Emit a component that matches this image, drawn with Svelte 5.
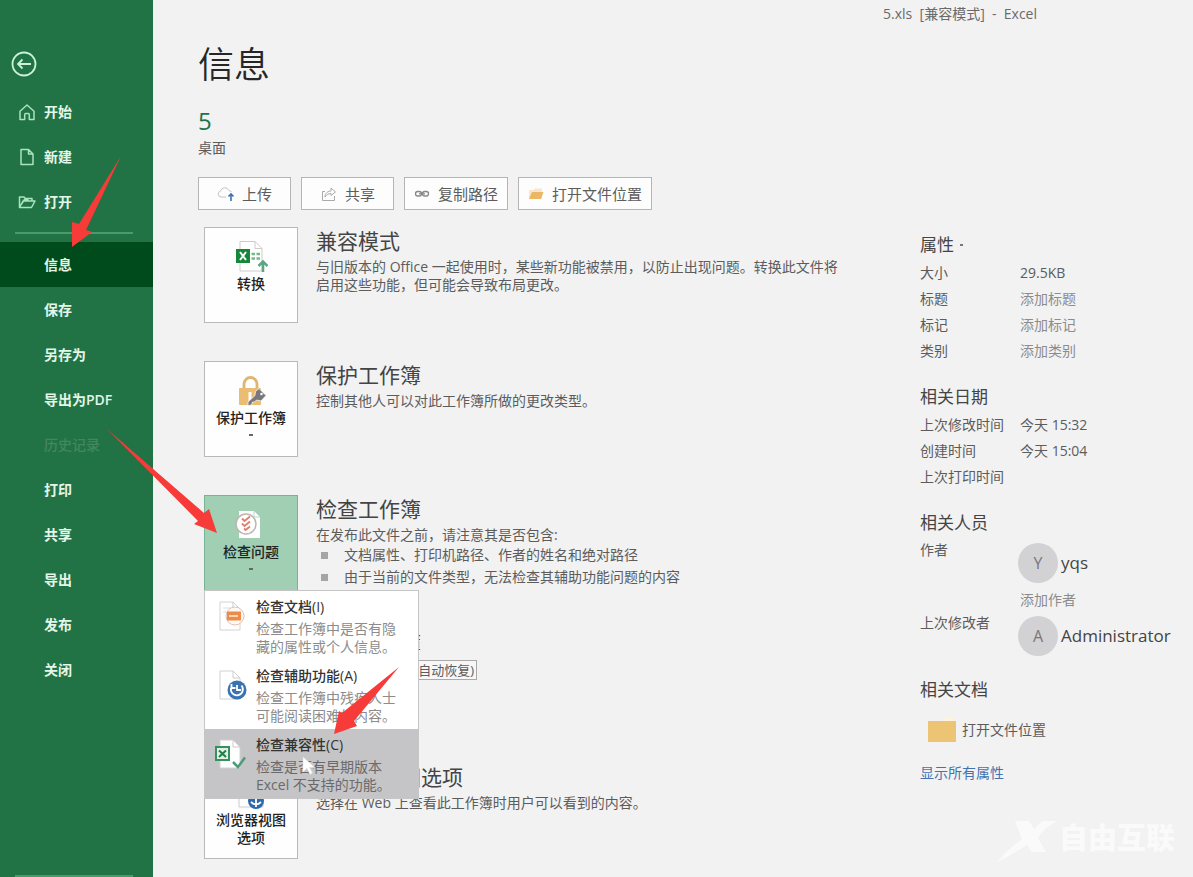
<script>
  const topNav = [
    { label: '开始', icon: 'home' },
    { label: '新建', icon: 'page' },
    { label: '打开', icon: 'open' }
  ];
  const nav = ['信息', '保存', '另存为', '导出为PDF', '历史记录', '打印', '共享', '导出', '发布', '关闭'];
  const props = [
    ['标题', '添加标题'],
    ['标记', '添加标记'],
    ['类别', '添加类别']
  ];
  const menu = [
    { id: 'doc', title: '检查文档(I)', lines: ['检查工作簿中是否有隐', '藏的属性或个人信息。'] },
    { id: 'access', title: '检查辅助功能(A)', lines: ['检查工作簿中残疾人士', '可能阅读困难的内容。'] },
    { id: 'compat', title: '检查兼容性(C)', lines: ['检查是否有早期版本', 'Excel 不支持的功能。'] }
  ];
</script>

<div class="app" lang="zh-CN">
  <nav class="side">
    <button class="back" aria-label="返回">
      <svg width="26" height="26" viewBox="0 0 26 26" fill="none" stroke="#c9f2d8" stroke-width="1.8"><circle cx="13" cy="13" r="11.5" /><path d="M20 13H7M11.5 8.500L7 13l4.500 4.500" /></svg>
    </button>
    {#each topNav as n}
      <button class="item">
        <svg width="18" height="18" viewBox="0 0 18 18" fill="none" stroke="#a9e3bf" stroke-width="1.5" stroke-linejoin="round">
          {#if n.icon === 'home'}
            <path d="M2 8.300L9 2l7 6.300V16.500H11.300V11.500a1 1 0 0 0-1-1H7.700a1 1 0 0 0-1 1V16.500H2z" />
          {:else if n.icon === 'page'}
            <path d="M3 1.500h7.500L15 6v10.500H3zM10.500 1.500V6H15" />
          {:else}
            <path d="M1.500 14.500V4h4.500l1.500 1.500h6.500V8M1.500 14.500L5 8h12l-3.500 6.500zM3.500 11l3-4.500h4" />
          {/if}
        </svg>
        <span>{n.label}</span>
      </button>
    {/each}
    <hr />
    {#each nav as n, i}
      <button class="item" class:active={i === 0} disabled={i === 4}><span>{n}</span></button>
    {/each}
    <hr class="foot" />
  </nav>

  <main>
    <header>5.xls&nbsp; [兼容模式]&nbsp; -&nbsp; Excel</header>
    <h1>信息</h1>
    <p class="name">5</p>
    <p class="place">桌面</p>
    <div class="actions">
      <button>
        <svg width="18" height="16" viewBox="0 0 18 16" fill="none"><path d="M9 11H4a3 3 0 0 1-.5-5.900A4.500 4.500 0 0 1 12 4.500 3 3 0 0 1 14.500 6" stroke="#c4c4c4" /><path d="M14 15V8M11.500 10.500L14 8l2.500 2.500" stroke="#3f70b5" stroke-width="1.600" /></svg>
        上传
      </button>
      <button>
        <svg width="18" height="16" viewBox="0 0 18 16" fill="none" stroke="#aaa"><path d="M5 5.500H2.500v9h12V10M5 11c0-4 3-6 6-6V2L15.500 6 11 9.500V7.500C8 7.500 6.500 9 5 11z" /></svg>
        共享
      </button>
      <button class="tight">
        <svg width="16" height="16" viewBox="0 0 16 16" fill="none" stroke="#888" stroke-width="1.300"><rect x="1.500" y="5.500" width="6" height="4.500" rx="2.200" /><rect x="8.500" y="5.500" width="6" height="4.500" rx="2.200" /><path d="M5 7.800h6" /></svg>
        复制路径
      </button>
      <button class="tight">
        <svg width="16" height="16" viewBox="0 0 16 16"><path d="M1 4h5l1-1.500h7V12H1z" fill="#fae5cb" /><path d="M4 6h11.500l-2.500 7H1z" fill="#e9b765" /></svg>
        打开文件位置
      </button>
    </div>

    <div class="cols">
      <div class="sections">
        <section>
          <button class="tile">
            <svg width="34" height="34" viewBox="0 0 34 34" fill="none">
              <path d="M6 1.500h15l7 7V31H6z" fill="#fff" stroke="#ccc" /><path d="M21 1.500v7h7" stroke="#ccc" />
              <rect x="2" y="9" width="14" height="14" fill="#15873b" /><path d="M6 12l6 8M12 12l-6 8" stroke="#fff" stroke-width="2" />
              <path d="M17.500 14h3.500M22.500 14H26M17.500 18.500h3.500M22.500 18.500H26" stroke="#76b78c" stroke-width="2.500" />
              <path d="M29 32V22M24.500 26l4.500-4.500 4.500 4.500" stroke="#5aa583" stroke-width="2.500" />
            </svg>
            <span>转换</span>
          </button>
          <div>
            <h2>兼容模式</h2>
            <p>与旧版本的 Office 一起使用时，某些新功能被禁用，以防止出现问题。转换此文件将<br />启用这些功能，但可能会导致布局更改。</p>
          </div>
        </section>

        <section>
          <button class="tile">
            <svg width="34" height="34" viewBox="0 0 34 34" fill="none">
              <path d="M10 15V10a6.500 6.500 0 0 1 13 0v5" stroke="#dfb56f" stroke-width="2.800" />
              <rect x="5" y="14" width="22" height="17" rx="1" fill="#eabd73" /><path d="M14.500 18h3v9h-3z" fill="#fff" />
              <path d="M25 14.500l7 7-5 5.500-4.500-1-2 2h-2l-1 3-3.500.500v-3.500l7-6.500.500-4z" fill="#77777c" stroke="#f6f6f6" stroke-width=".8" /><circle cx="27.500" cy="20" r="1.300" fill="#fff" />
            </svg>
            <span>保护工作簿</span><i></i>
          </button>
          <div>
            <h2>保护工作簿</h2>
            <p>控制其他人可以对此工作簿所做的更改类型。</p>
          </div>
        </section>

        <section>
          <div class="holder">
            <button class="tile on" aria-expanded="true">
              <svg width="34" height="34" viewBox="0 0 34 34" fill="none">
                <path d="M5 3h15l6 6v21H5z" fill="#fff" /><path d="M20 3v6h6" stroke="#bcd5c5" />
                <circle cx="12" cy="16" r="10" fill="#fff" stroke="#bbb5b1" stroke-width="1.500" /><path d="M8 10.500l2.500 2.500L16 8.500M8 15.500l2.500 2.500L16 13.500M10 20.500l1.500 1.500L16 18.500" stroke="#dd7f6c" stroke-width="1.800" />
              </svg>
              <span>检查问题</span><i></i>
            </button>
            <div class="menu" role="menu">
              {#each menu as m}
                <button class="entry" class:hover={m.id === 'compat'} role="menuitem">
                  <svg width="40" height="36" viewBox="0 0 40 36" fill="none">
                    <path d="M10 5h13l7 7v21H10z" fill="#fff" stroke="#d2d2d2" /><path d="M23 5v7h7" stroke="#ccc" />
                    {#if m.id === 'doc'}
                      <path d="M13 11h8M13 15h3" stroke="#ddd" />
                      <circle cx="25" cy="19" r="9" fill="#fff8f3" stroke="#e3c0b3" /><rect x="17" y="14.500" width="14" height="9" fill="#ed8b48" /><path d="M19 19h9" stroke="#fff4df" stroke-width="1.500" />
                    {:else if m.id === 'access'}
                      <circle cx="27" cy="24" r="9.500" fill="#3a73b4" /><path d="M21 22a6 6 0 1 0 10.500-2.500M21.500 18v4h4M27 19v5h4" stroke="#fff" stroke-width="1.800" />
                    {:else}
                      <rect x="6" y="12" width="13" height="13" fill="#def2e5" stroke="#38905b" stroke-width="2" /><path d="M9 15.500l7 6.500M16 15.500L9 22" stroke="#227d48" stroke-width="2" />
                      <path d="M23 27l5 5L35 22.500" stroke="#4e9b75" stroke-width="2.500" />
                    {/if}
                  </svg>
                  <span class="txt"><b>{m.title}</b><small>{m.lines[0]}<br />{m.lines[1]}</small></span>
                </button>
              {/each}
            </div>
          </div>
          <div>
            <h2>检查工作簿</h2>
            <p>在发布此文件之前，请注意其是否包含:</p>
            <ul>
              <li>文档属性、打印机路径、作者的姓名和绝对路径</li>
              <li>由于当前的文件类型，无法检查其辅助功能问题的内容</li>
            </ul>
          </div>
        </section>

        <section>
          <div class="tile"></div>
          <div>
            <h2>管理工作簿</h2>
            <button class="recover">(自动恢复)</button>
          </div>
        </section>

        <section>
          <button class="tile">
            <svg width="34" height="34" viewBox="0 0 34 34" fill="none"><path d="M5 2h18l6 6v23H5z" stroke="#ccc" /><circle cx="22" cy="25" r="8" fill="#2d69ad" /><path d="M22 17v14M17 26c3 3 7 3 10 0" stroke="#fff" stroke-width="1.800" /></svg>
            <span>浏览器视图<br />选项</span>
          </button>
          <div>
            <h2>浏览器视图选项</h2>
            <p>选择在 Web 上查看此工作簿时用户可以看到的内容。</p>
          </div>
        </section>
      </div>

      <aside>
        <h3>属性 <i></i></h3>
        <dl>
          <dt>大小</dt><dd>29.5KB</dd>
          {#each props as p}
            <dt>{p[0]}</dt><dd class="add">{p[1]}</dd>
          {/each}
        </dl>
        <h3>相关日期</h3>
        <dl>
          <dt>上次修改时间</dt><dd>今天 15:32</dd>
          <dt>创建时间</dt><dd>今天 15:04</dd>
          <dt>上次打印时间</dt><dd></dd>
        </dl>
        <h3>相关人员</h3>
        <dl class="people">
          <dt>作者</dt>
          <dd><div class="person"><span>Y</span>yqs</div><p class="add">添加作者</p></dd>
          <dt>上次修改者</dt>
          <dd><div class="person"><span>A</span>Administrator</div></dd>
        </dl>
        <h3>相关文档</h3>
        <button class="folder">
          <svg width="28" height="26" viewBox="0 0 28 26"><path d="M15 5l2-4h8l2 4z" fill="#fff3d9" /><rect y="4" width="28" height="21" fill="#ecc474" /></svg>
          打开文件位置
        </button>
        <a href="#all">显示所有属性</a>
      </aside>
    </div>
  </main>

  <svg class="mark a1" width="54" height="94" viewBox="0 0 54 94"><path d="M51 0L16 74l6 2L2 91V66l7 2z" /></svg>
  <svg class="mark a2" width="112" height="106" viewBox="0 0 112 106"><path d="M0 0L97 84l5-4 8 24-23-9 4-3z" /></svg>
  <svg class="mark a3" width="66" height="68" viewBox="0 0 66 68"><path d="M65 0L20 54l3 5L0 67l5-23 3 2z" /></svg>
  <svg class="pointer" width="14" height="20" viewBox="0 0 14 20"><path d="M1 1v15l4-3.500 3 6 2.500-1.500-3-5.500H13z" fill="#fff" stroke="#ddd" stroke-width=".6" /></svg>
  <div class="brand">
    <svg width="64" height="50" viewBox="0 0 64 50"><path d="M20 8h14l5 8 8-8h16C50 14 46 20 43 25l8 14H37l-5-7C21 39 12 44 1 50c7-8 14-15 26-24z" fill="#fafafa" /></svg>
    <span>自由互联</span>
  </div>
</div>

<style>
  :global(body) { margin: 0; background: #f2f2f2; }
  .app { position: relative; display: flex; min-height: 100vh; overflow: hidden; font: 14px/18px "Open Sans", "Noto Sans CJK SC", sans-serif; color: #5c5c5c; }
  button { font: inherit; color: inherit; margin: 0; padding: 0; border: 0; background: none; text-align: left; box-sizing: border-box; }
  h1, h2, h3, p, ul, dl, dd { margin: 0; padding: 0; font-weight: 400; }
  svg { display: block; flex: none; }

  .side { flex: none; width: 153px; box-sizing: border-box; padding-top: 51px; background: #217346; display: flex; flex-direction: column; }
  .back { padding-left: 11px; margin-bottom: 12px; }
  .item { display: flex; align-items: center; height: 45px; padding-left: 18px; gap: 8px; color: #e3f6e9; font-weight: 600; flex: none; }
  .item span:only-child { margin-left: 26px; }
  .item.active { background: #004b1c; }
  .item:disabled { color: #43875f; font-weight: 500; }
  hr { width: 118px; height: 2px; border: 0; margin: 8px 0 8px 15px; background: #4a9a6c; flex: none; }
  hr.foot { margin: auto 0 0 15px; }

  main { flex: 1; min-width: 0; padding-left: 45px; }
  header { height: 28px; line-height: 28px; text-align: right; padding-right: 156px; color: #6a6a6a; }
  h1 { font-size: 36px; line-height: 48px; margin-top: 13px; color: #262626; font-weight: 350; }
  .name { font-size: 24px; line-height: 30px; margin-top: 17px; color: #217346; }
  .place { line-height: 24px; }
  .actions { display: flex; gap: 10px; margin-top: 17px; }
  .actions button { display: flex; align-items: center; gap: 7px; height: 33px; padding: 0 18px; border: 1px solid #b5b5b5; background: #fdfdfd; font-size: 15px; white-space: nowrap; }
  .actions .tight { padding: 0 9px; gap: 8px; }

  .cols { display: flex; margin-top: 17px; }
  .sections { flex: 1; min-width: 0; padding-left: 6px; display: flex; flex-direction: column; gap: 38px; }
  section { display: flex; gap: 18px; white-space: nowrap; }
  section h2 { margin-top: -1px; }
  .tile { display: flex; flex-direction: column; align-items: center; width: 94px; height: 96px; box-sizing: border-box; padding-top: 12px; border: 1px solid #b9b9b9; background: #fefefe; color: #222; font-weight: 500; text-align: center; flex: none; }
  .tile span { margin-top: 1px; }
  .tile i { width: 4px; height: 2px; margin-top: 7px; background: #666; }
  .tile.on { background: #a0cfb4; border-color: #79b294; }
  h2 { font-size: 21px; line-height: 30px; margin-bottom: 2px; color: #444; }
  ul { list-style: none; line-height: 22px; }
  li { display: flex; align-items: center; gap: 16px; padding-left: 5px; }
  li::before { content: ""; width: 7px; height: 7px; background: #a5a5a5; }
  .recover { width: 161px; height: 20px; border: 1px solid #aaa; padding-right: 2px; text-align: right; font-size: 13px; background: #f7f7f7; }

  .holder { position: relative; }
  .menu { position: absolute; z-index: 1; left: 0; top: 95px; width: 215px; box-sizing: border-box; border: 1px solid #c6c6c6; background: #fff; }
  .entry { display: flex; width: 100%; height: 69px; padding: 6px 0 4px 5px; gap: 6px; }
  .entry.hover { background: #c5c4c6; }
  .txt { display: flex; flex-direction: column; gap: 3px; }
  .txt b { font-weight: 500; line-height: 20px; color: #333; }
  .txt small { font-size: 14px; color: #8c8c8c; }
  .hover .txt small { color: #6a6a6a; }

  aside { flex: none; width: 273px; padding-top: 5px; }
  h3 { font-size: 17px; line-height: 26px; color: #444; }
  h3 i { display: inline-block; width: 3px; height: 2px; margin: 0 0 5px 2px; background: #777; }
  dl { display: grid; grid-template-columns: 100px 1fr; line-height: 26px; padding: 2px 0 20px; }
  .add { color: #8c8c8c; }
  .people { line-height: 20px; padding: 4px 0 21px; }
  .people dd { margin-left: -2px; }
  .person { display: flex; align-items: center; gap: 3px; font-size: 17px; padding-top: 3px; color: #444; }
  .person span { width: 40px; height: 40px; line-height: 40px; border-radius: 50%; background: #d2d2d4; color: #777; text-align: center; font-size: 16px; }
  .people .add { padding: 7px 0 3px 2px; }
  .folder { display: flex; align-items: center; gap: 6px; margin: 14px 0 21px 8px; }
  aside a { color: #4472b0; text-decoration: none; }

  .mark, .pointer, .brand { position: absolute; z-index: 2; pointer-events: none; }
  .mark { fill: #f73b38; }
  .a1 { left: 70px; top: 156px; }
  .a2 { left: 107px; top: 429px; }
  .a3 { left: 334px; top: 667px; }
  .pointer { left: 302px; top: 756px; }
  .brand { right: 18px; bottom: 14px; display: flex; align-items: center; color: #fafafa; font-size: 29px; font-weight: 900; line-height: 50px; }
</style>
